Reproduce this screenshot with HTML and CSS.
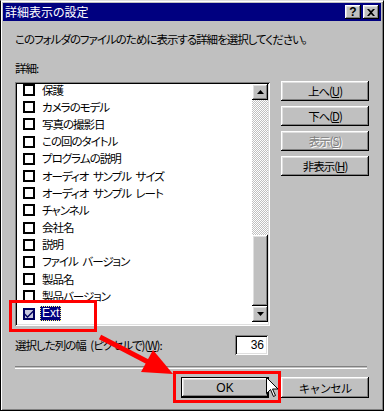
FILE: index.html
```html
<!DOCTYPE html>
<html>
<head>
    <title>詳細表示の設定</title>
    <link rel="stylesheet" href="styles.css">
</head>
<body>
    <div class="window">
        <div class="titlebar">
            <span class="title">詳細表示の設定</span>
            <div class="title-buttons">
                <span class="tbtn raised help">?</span>
                <span class="tbtn raised">
                    <svg width="8" height="7" viewBox="0 0 8 7"><path d="M0 0h2l2 2 2-2h2L5 3.5 8 7H6L4 5 2 7H0l3-3.5z" fill="#000"/></svg>
                </span>
            </div>
        </div>

        <div class="content">
            <p class="intro">このフォルダのファイルのために表示する詳細を選択してください。</p>
            <p class="label">詳細:</p>

            <div class="main-row">
                <div class="listbox sunken">
                    <ul class="items">
                        <li><span class="check"></span><span class="name">保護</span></li>
                        <li><span class="check"></span><span class="name">カメラのモデル</span></li>
                        <li><span class="check"></span><span class="name">写真の撮影日</span></li>
                        <li><span class="check"></span><span class="name">この回のタイトル</span></li>
                        <li><span class="check"></span><span class="name">プログラムの説明</span></li>
                        <li><span class="check"></span><span class="name">オーディオ サンプル サイズ</span></li>
                        <li><span class="check"></span><span class="name">オーディオ サンプル レート</span></li>
                        <li><span class="check"></span><span class="name">チャンネル</span></li>
                        <li><span class="check"></span><span class="name">会社名</span></li>
                        <li><span class="check"></span><span class="name">説明</span></li>
                        <li><span class="check"></span><span class="name">ファイル バージョン</span></li>
                        <li><span class="check"></span><span class="name">製品名</span></li>
                        <li><span class="check"></span><span class="name">製品バージョン</span></li>
                        <li class="selected">
                            <span class="check checked">
                                <svg width="8" height="8" viewBox="0 0 8 8"><path d="M0 3.5l2.5 2.5L8 0.5v2L2.5 8 0 5.5z" fill="#000060"/></svg>
                            </span>
                            <span class="name">Ext</span>
                        </li>
                    </ul>
                    <div class="scrollbar">
                        <span class="arrow raised">
                            <svg width="7" height="4" viewBox="0 0 7 4"><path d="M3.5 0L7 4H0z" fill="#000"/></svg>
                        </span>
                        <span class="track"></span>
                        <span class="thumb raised"></span>
                        <span class="arrow raised">
                            <svg width="7" height="4" viewBox="0 0 7 4"><path d="M0 0h7L3.5 4z" fill="#000"/></svg>
                        </span>
                    </div>
                </div>

                <div class="side-buttons">
                    <button class="btn raised">上へ(<u>U</u>)</button>
                    <button class="btn raised">下へ(<u>D</u>)</button>
                    <button class="btn raised disabled">表示(<u>S</u>)</button>
                    <button class="btn raised">非表示(<u>H</u>)</button>
                </div>
            </div>

            <div class="width-row">
                <span>選択した列の幅 (ピクセルで)(<u>W</u>):</span>
                <span class="field sunken">36</span>
            </div>

            <div class="separator"></div>

            <div class="footer">
                <button class="btn raised default">OK</button>
                <button class="btn raised">キャンセル</button>
            </div>
        </div>

        <div class="mark mark-ext"></div>
        <div class="mark mark-ok"></div>
        <svg class="red-arrow" width="384" height="411" viewBox="0 0 384 411">
            <line x1="100" y1="337" x2="150" y2="363" stroke="#f00" stroke-width="5"/>
            <polygon points="173,374 141,372 153,350" fill="#f00"/>
        </svg>
        <svg class="cursor" width="12" height="20" viewBox="0 0 12 20">
            <path d="M0.5 0.5v16l4-4 3 7 2-1-3-6.5h5.5z" fill="#fff" stroke="#000"/>
        </svg>
    </div>
</body>
</html>
```

FILE: styles.css
```css
body {
    margin: 0;
    font-family: "Noto Sans CJK JP", "Noto Sans", sans-serif;
    font-size: 11.5px;
    letter-spacing: -1px;
    word-spacing: 3px;
    font-feature-settings: "palt";
    color: #000;
    background: #c0c0c0;
}
p {
    margin: 0;
}
.window {
    position: relative;
    width: 384px;
    height: 411px;
    box-sizing: border-box;
    background: #c0c0c0;
    border: 1px solid;
    border-color: #dfdfdf #000 #000 #000;
    box-shadow: inset 1px 1px #fff, inset -1px -1px #808080;
    padding: 2px;
    overflow: hidden;
}
.raised {
    background: #c0c0c0;
    box-shadow: inset -1px -1px #000, inset 1px 1px #fff, inset -2px -2px #808080, inset 2px 2px #dfdfdf;
}
.sunken {
    box-shadow: inset 1px 1px #808080, inset -1px -1px #fff, inset 2px 2px #000, inset -2px -2px #dfdfdf;
}
.titlebar {
    height: 18px;
    background: #000080;
    color: #fff;
    display: flex;
    align-items: center;
    justify-content: space-between;
    padding: 0 2px 0 2px;
}
.title {
    font-size: 12px;
    letter-spacing: 0;
    line-height: 18px;
}
.title-buttons {
    display: flex;
    gap: 2px;
}
.tbtn {
    width: 16px;
    height: 14px;
    display: flex;
    align-items: center;
    justify-content: center;
    color: #000;
}
.help {
    font-family: "Liberation Sans", sans-serif;
    font-weight: bold;
    font-size: 12px;
    letter-spacing: 0;
    line-height: 14px;
}
.content {
    padding: 0 10px 0 12px;
}
.intro {
    margin-top: 11px;
    line-height: 14px;
}
.label {
    margin-top: 15px;
    line-height: 14px;
}
.main-row {
    display: flex;
    align-items: flex-start;
    margin-top: 7px;
}
.listbox {
    width: 255px;
    height: 244px;
    box-sizing: border-box;
    padding: 2px;
    background: #fff;
    display: flex;
}
.items {
    list-style: none;
    margin: 0;
    padding: 0;
    flex: 1;
}
.items li {
    height: 17.2px;
    display: flex;
    align-items: center;
}
.items li:first-child {
    margin-top: -2.5px;
}
.check {
    width: 12px;
    height: 12px;
    box-sizing: border-box;
    border: 2px solid #000;
    margin-left: 6px;
    display: flex;
    align-items: center;
    justify-content: center;
}
.check.checked {
    border-color: #000060;
    background: #c8c8e0;
}
.name {
    margin-left: 7px;
    line-height: 13px;
    white-space: nowrap;
}
.selected .name {
    background: #000080;
    color: #fff;
    padding: 1px 2px;
    margin-left: 5px;
    outline: 1px dotted #ffff80;
    outline-offset: -1px;
    font-family: "Liberation Sans", sans-serif;
    letter-spacing: 0;
    font-size: 12px;
}
.scrollbar {
    width: 16px;
    display: flex;
    flex-direction: column;
}
.arrow {
    height: 16px;
    display: flex;
    align-items: center;
    justify-content: center;
}
.track {
    height: 135px;
    background: repeating-conic-gradient(#c0c0c0 0 25%, #fff 0 50%) 0 0 / 2px 2px;
}
.thumb {
    height: 71px;
}
.side-buttons {
    margin-left: 11px;
    margin-top: -1px;
    display: flex;
    flex-direction: column;
    gap: 5px;
}
.btn {
    width: 88px;
    height: 20px;
    border: none;
    padding: 0;
    font-family: inherit;
    font-size: 11.5px;
    letter-spacing: -1px;
    color: #000;
    line-height: 18px;
}
.btn u {
    text-underline-offset: 1px;
}
.disabled {
    color: #808080;
    text-shadow: 1px 1px #fff;
}
.width-row {
    width: 253px;
    display: flex;
    align-items: center;
    justify-content: space-between;
    margin-top: 9px;
    height: 20px;
}
.field {
    width: 33px;
    height: 20px;
    box-sizing: border-box;
    background: #fff;
    text-align: right;
    padding: 2px 4px 0 0;
    line-height: 17px;
    font-family: "Liberation Sans", sans-serif;
    font-size: 12px;
    letter-spacing: 0;
}
.separator {
    margin-top: 11px;
    height: 1px;
    border-top: 1px solid #808080;
    border-bottom: 1px solid #fff;
    width: 352px;
}
.footer {
    width: 354px;
    display: flex;
    justify-content: flex-end;
    gap: 12px;
    margin-top: 8px;
}
.footer .btn {
    height: 21px;
}
.footer .default {
    font-family: "Liberation Sans", sans-serif;
    font-size: 12px;
    letter-spacing: 0;
}
.default {
    box-shadow: inset 0 0 0 1px #000, inset -2px -2px #000, inset 2px 2px #fff, inset -3px -3px #808080, inset 3px 3px #dfdfdf;
}
.mark {
    position: absolute;
    border: 3px solid #f00;
    box-sizing: border-box;
}
.mark-ext {
    left: 8px;
    top: 299px;
    width: 88px;
    height: 32px;
}
.mark-ok {
    left: 172px;
    top: 370px;
    width: 108px;
    height: 32px;
}
.red-arrow {
    position: absolute;
    left: -1px;
    top: -1px;
}
.cursor {
    position: absolute;
    left: 265px;
    top: 376px;
}
```
